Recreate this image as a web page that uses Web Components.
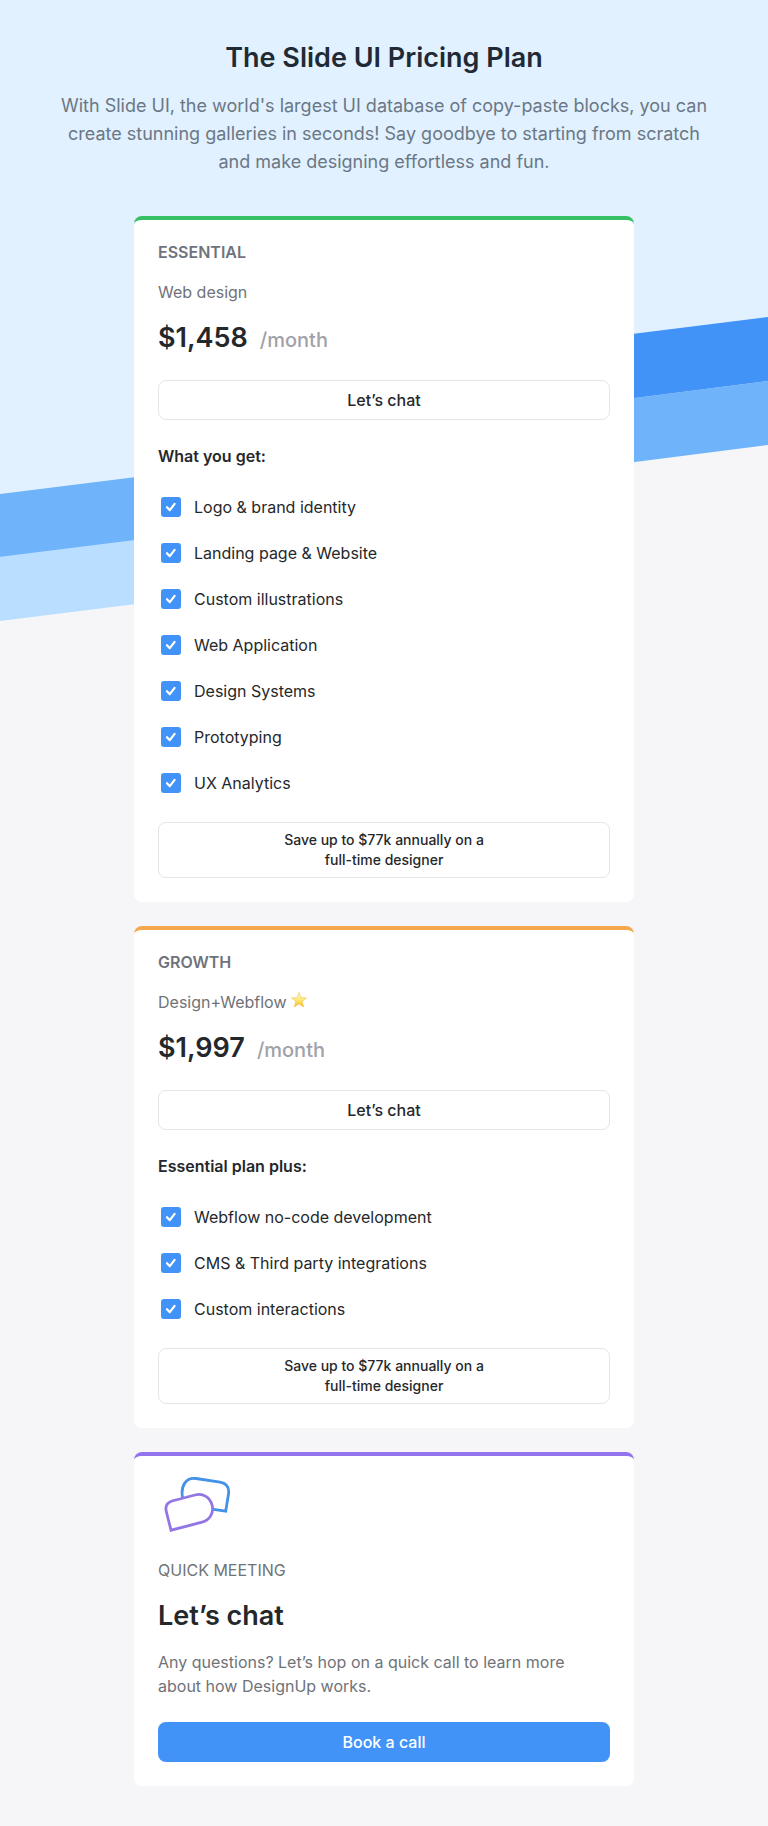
<!DOCTYPE html>
<html lang="en">
<head>
<meta charset="utf-8">
<meta name="viewport" content="width=device-width, initial-scale=1">
<title>The Slide UI Pricing Plan</title>
<style>
  body {
    margin: 0;
    background: #f6f6f8;
    color: #25282b;
    font: 16px/24px Inter, "Liberation Sans", sans-serif;
  }
</style>
</head>
<body>
<pricing-page>
  <page-header slot="header">
    <span slot="title">The Slide UI Pricing Plan</span>
    With Slide UI, the world's largest UI database of copy-paste blocks, you can create stunning galleries in seconds! Say goodbye to starting from scratch and make designing effortless and fun.
  </page-header>

  <plan-card style="--accent: #34c065">
    <span slot="name">Essential</span>
    <span slot="summary">Web design</span>
    <span slot="price">$1,458</span>
    <span slot="lead">What you get:</span>
    <plan-feature>Logo &amp; brand identity</plan-feature>
    <plan-feature>Landing page &amp; Website</plan-feature>
    <plan-feature>Custom illustrations</plan-feature>
    <plan-feature>Web Application</plan-feature>
    <plan-feature>Design Systems</plan-feature>
    <plan-feature>Prototyping</plan-feature>
    <plan-feature>UX Analytics</plan-feature>
  </plan-card>

  <plan-card style="--accent: #f2a94e">
    <span slot="name">Growth</span>
    <span slot="summary">Design+Webflow <star-icon></star-icon></span>
    <span slot="price">$1,997</span>
    <span slot="lead">Essential plan plus:</span>
    <plan-feature>Webflow no-code development</plan-feature>
    <plan-feature>CMS &amp; Third party integrations</plan-feature>
    <plan-feature>Custom interactions</plan-feature>
  </plan-card>

  <meeting-card style="--accent: #9373ee">
    <span slot="eyebrow">Quick meeting</span>
    <span slot="title">Let’s chat</span>
    Any questions? Let’s hop on a quick call to learn more about how DesignUp works.
    <span slot="action">Book a call</span>
  </meeting-card>
</pricing-page>

<script>
  const define = (name, markup) => {
    const template = document.createElement('template');
    template.innerHTML = markup;
    customElements.define(name, class extends HTMLElement {
      constructor() {
        super();
        this.attachShadow({ mode: 'open' }).append(template.content.cloneNode(true));
      }
    });
  };

  const cardStyles = `
    *, :host { box-sizing: border-box; }
    :host {
      display: flex;
      flex-direction: column;
      padding: 20px 24px 24px;
      border-top: 4px solid var(--accent);
      border-radius: 8px;
      background: #fff;
    }
    h2, h3, p { margin: 0; font: inherit; }
  `;

  define('page-backdrop', `
    <style>
      :host { display: block; height: 640px; }
      svg { display: block; width: 100%; height: 100%; }
    </style>
    <svg viewBox="0 0 768 640" preserveAspectRatio="none" aria-hidden="true">
      <path fill="#e1f1ff" d="M0 0H768V318L384 366V446L0 494Z"/>
      <path fill="#b9deff" d="M0 557L384 509V573L0 621Z"/>
      <path fill="#6fb4fb" d="M0 494L384 446V509L0 557Z"/>
      <path fill="#6fb4fb" d="M384 430L768 381V445L384 494Z"/>
      <path fill="#4193f8" d="M384 365L768 317V381L384 430Z"/>
    </svg>
  `);

  define('pricing-page', `
    <style>
      :host { display: block; position: relative; padding: 40px 24px; }
      page-backdrop { position: absolute; inset: 0 0 auto; }
      main { position: relative; display: grid; gap: 40px; }
      .plans { display: grid; gap: 24px; width: 100%; max-width: 500px; margin: 0 auto; }
    </style>
    <page-backdrop></page-backdrop>
    <main>
      <slot name="header"></slot>
      <div class="plans"><slot></slot></div>
    </main>
  `);

  define('page-header', `
    <style>
      :host { display: block; width: 100%; max-width: 656px; margin: 0 auto; text-align: center; }
      h1 { margin: 0 0 16px; font-size: 27px; line-height: 36px; font-weight: 600; color: #1f2a35; }
      p { margin: 0; font-size: 18px; line-height: 28px; color: #6b7785; }
    </style>
    <h1><slot name="title"></slot></h1>
    <p><slot></slot></p>
  `);

  define('star-icon', `
    <style>
      :host { display: inline-block; vertical-align: baseline; line-height: 0; }
      svg { display: block; width: 16px; height: 16px; }
    </style>
    <svg viewBox="0 0 16 16" role="img" aria-label="star">
      <defs>
        <linearGradient id="gold" x1="0" y1="0" x2="0" y2="1">
          <stop offset="0" stop-color="#fff8d0"/>
          <stop offset=".5" stop-color="#fdea78"/>
          <stop offset="1" stop-color="#f5bd1c"/>
        </linearGradient>
      </defs>
      <path fill="url(#gold)" stroke="#f0bd55" stroke-width=".6" stroke-linejoin="round" d="M8 .6L9.9 5.6L15.5 5.9L11.2 9.4L12.7 15L8 11.9L3.3 15L4.8 9.4L.5 5.9L6.1 5.6Z"/>
    </svg>
  `);

  define('plan-feature', `
    <style>
      :host { display: block; }
      label { display: flex; align-items: center; gap: 13px; min-height: 46px; }
      input {
        appearance: none;
        flex: none;
        width: 20px;
        height: 20px;
        margin: 0 0 0 3px;
        border: 0;
        border-radius: 3px;
        background: #e6e6e8;
      }
      input:checked {
        background: #4193f8 url("data:image/svg+xml,%3Csvg xmlns='http://www.w3.org/2000/svg' viewBox='0 0 20 20'%3E%3Cpath fill='none' stroke='white' stroke-width='2.2' stroke-linecap='round' stroke-linejoin='round' d='M6 10.2L8.8 13.2L13.6 6.9'/%3E%3C/svg%3E") center / 20px 20px no-repeat;
      }
    </style>
    <label><input type="checkbox" checked><span><slot></slot></span></label>
  `);

  define('plan-card', `
    <style>
      ${cardStyles}
      .name { font-weight: 600; text-transform: uppercase; color: #6f737b; }
      .summary { margin-top: 16px; color: #6f7378; }
      .price { display: flex; align-items: baseline; gap: 12px; margin-top: 16px; }
      .amount { font-size: 27px; line-height: 36px; font-weight: 600; }
      .period { font-size: 20px; line-height: 24px; font-weight: 500; color: #9fa2a8; }
      button {
        min-height: 40px;
        margin: 24px 0;
        padding: 7px 16px;
        border: 1px solid #e6e6e8;
        border-radius: 8px;
        background: #fff;
        color: inherit;
        font: inherit;
        font-weight: 500;
      }
      .lead { font-weight: 600; }
      .features { margin: 16px 0; }
      .saving {
        display: flex;
        justify-content: center;
        padding: 7px 16px;
        border: 1px solid #e6e6e8;
        border-radius: 8px;
        font-size: 14px;
        line-height: 20px;
        font-weight: 500;
        text-align: center;
      }
      .saving span { max-width: 216px; }
    </style>
    <h2 class="name"><slot name="name"></slot></h2>
    <p class="summary"><slot name="summary"></slot></p>
    <p class="price"><span class="amount"><slot name="price"></slot></span><span class="period">/month</span></p>
    <button type="button">Let’s chat</button>
    <h3 class="lead"><slot name="lead"></slot></h3>
    <div class="features"><slot></slot></div>
    <p class="saving"><span>Save up to $77k annually on a full-time designer</span></p>
  `);

  define('meeting-card', `
    <style>
      ${cardStyles}
      svg { display: block; width: 76px; height: 66px; }
      .eyebrow { margin-top: 16px; text-transform: uppercase; color: #6f7378; }
      h2 { margin-top: 16px; font-size: 27px; line-height: 36px; font-weight: 600; }
      .text { margin-top: 16px; max-width: 420px; color: #6f7378; }
      button {
        min-height: 40px;
        margin-top: 24px;
        padding: 8px 16px;
        border: 0;
        border-radius: 8px;
        background: #4193f8;
        color: #fff;
        font: inherit;
        font-weight: 500;
      }
    </style>
    <svg viewBox="0 0 76 66" fill="none" stroke-width="2.8" aria-hidden="true">
      <path stroke="#4492e8" d="M24.5 21.5C22.5 10 28 1 38 2.5L62 6.2Q72 8 70.5 18L67.7 35.2L55.5 33.3"/>
      <path stroke="#9176e4" d="M13 54.2L8.3 35.5Q6.3 27.5 14 25L37 19C45 16.8 52.2 21.5 54.2 29.5C56 37.5 51.5 44.2 44 46.2Z"/>
    </svg>
    <p class="eyebrow"><slot name="eyebrow"></slot></p>
    <h2><slot name="title"></slot></h2>
    <p class="text"><slot></slot></p>
    <button type="button"><slot name="action"></slot></button>
  `);
</script>
</body>
</html>
